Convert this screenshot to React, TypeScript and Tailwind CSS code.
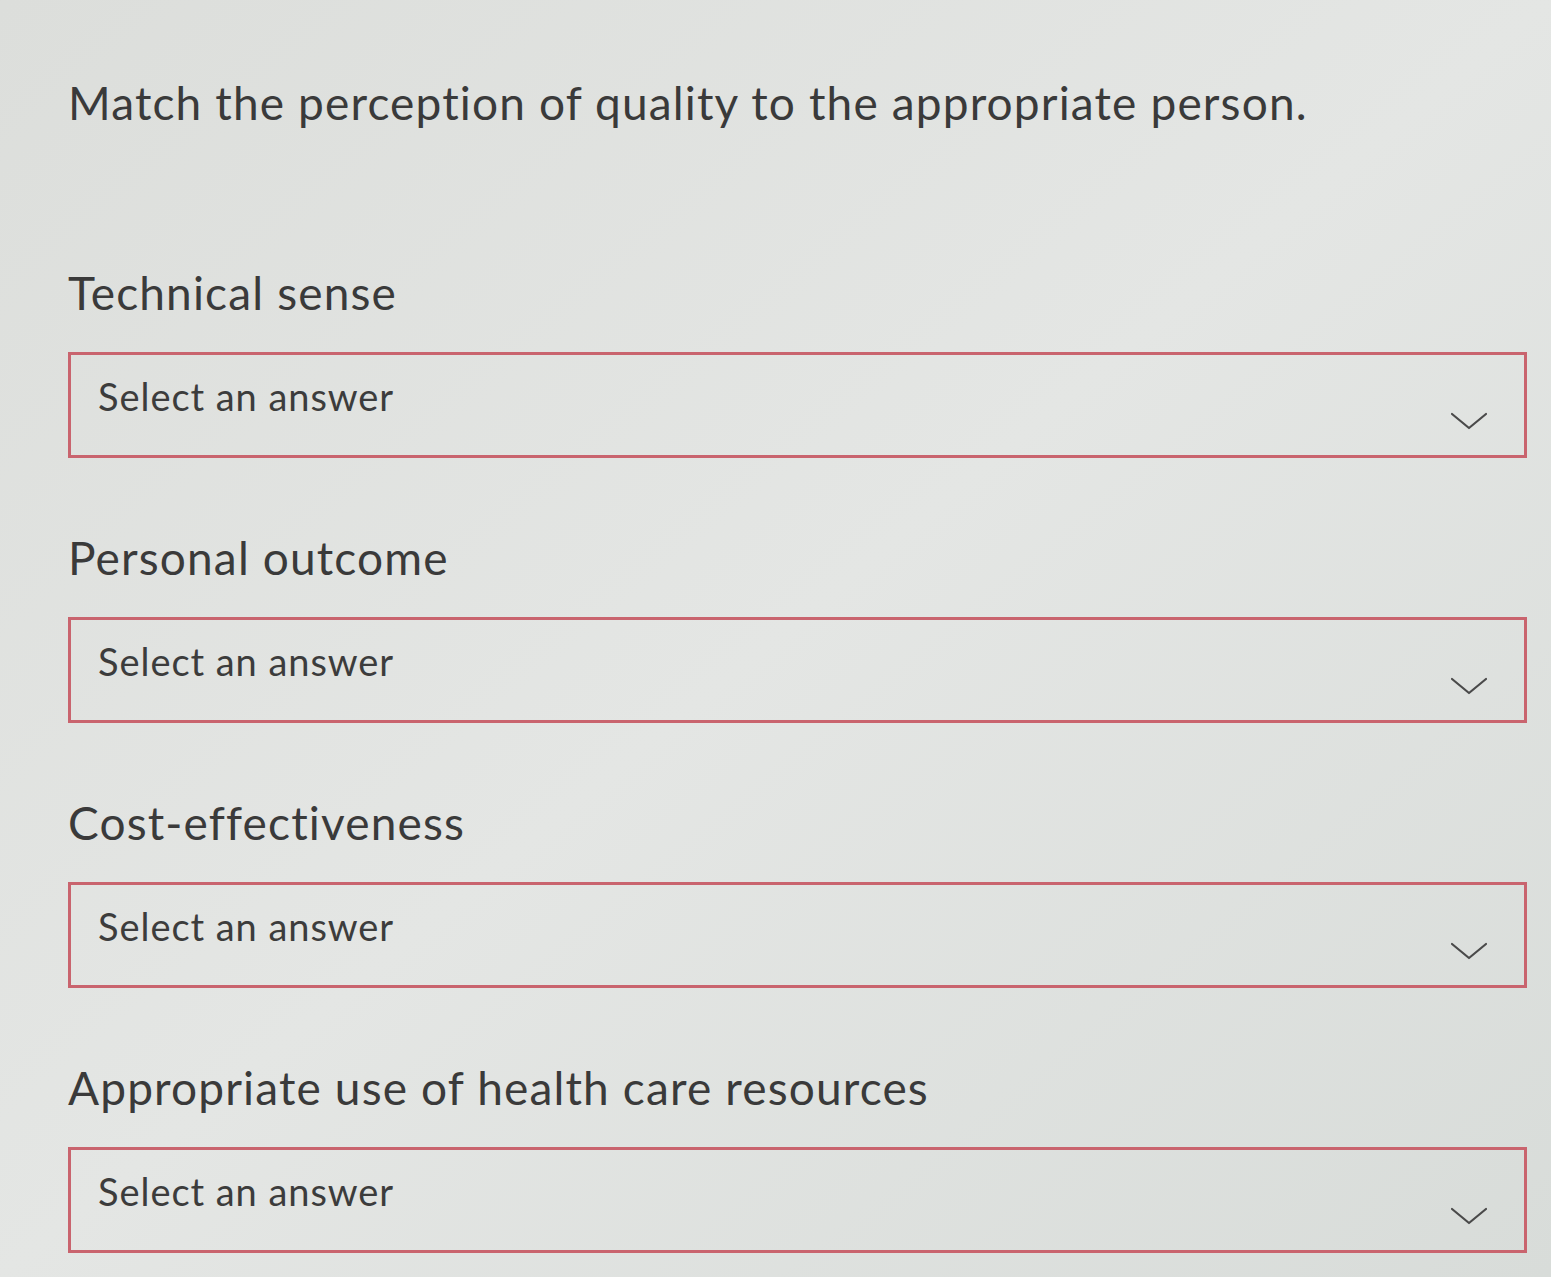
const questions = [
  'Technical sense',
  'Personal outcome',
  'Cost-effectiveness',
  'Appropriate use of health care resources',
];

function Chevron() {
  return (
    <svg width="38" height="20" viewBox="0 0 38 20" fill="none" className="absolute right-[36px] top-[56px]">
      <path d="M2 3 L19 17 L36 3" stroke="#4a4a4a" strokeWidth="2.2" strokeLinecap="round" strokeLinejoin="round" />
    </svg>
  );
}

function AnswerSelect() {
  return (
    <div className="relative h-[106px] border-[3px] border-[#c9646e]">
      <span className="absolute left-[27px] top-[22px] text-[38px] leading-none tracking-wide text-[#3c3c3c]">
        Select an answer
      </span>
      <Chevron />
    </div>
  );
}

export default function App() {
  return (
    <div
      className="min-h-screen bg-gradient-to-br from-[#dcdedb] via-[#e4e6e4] to-[#d8dcd9] pl-[68px] pr-[24px] pt-[80px] pb-6"
      style={{ fontFamily: 'Lato, "Open Sans", sans-serif' }}
    >
      <h1 className="text-[46px] font-normal leading-none tracking-wide text-[#3a3a3a]">
        Match the perception of quality to the appropriate person.
      </h1>
      <div className="mt-[144px] flex flex-col gap-[77px]">
        {questions.map((q) => (
          <div key={q} className="flex flex-col gap-[36px]">
            <label className="text-[46px] leading-none tracking-wide text-[#3a3a3a]">{q}</label>
            <AnswerSelect />
          </div>
        ))}
      </div>
    </div>
  );
}
